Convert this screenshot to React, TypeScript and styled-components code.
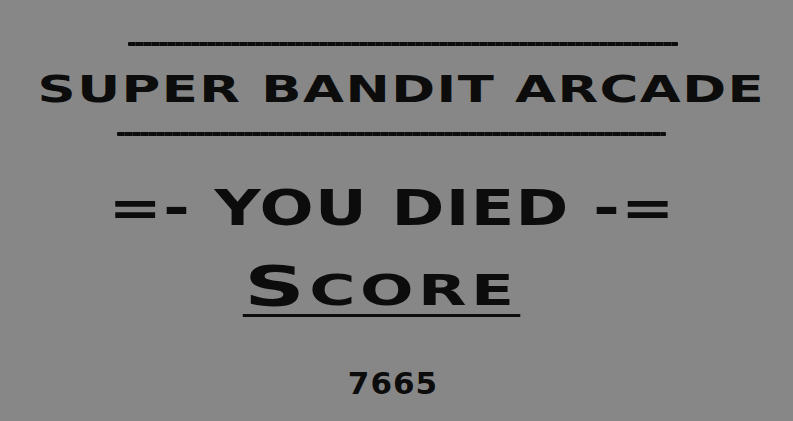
import React from 'react'
import styled, { createGlobalStyle } from 'styled-components'

const GlobalStyle = createGlobalStyle`
  html, body {
    margin: 0;
    padding: 0;
    background: #878787;
  }
  body {
    font-family: 'DejaVu Sans', 'Liberation Sans', sans-serif;
    color: #0c0c0c;
  }
`

const Screen = styled.div`
  align-items: center;
  box-sizing: border-box;
  display: flex;
  flex-direction: column;
  height: 421px;
  overflow: hidden;
  padding-top: 42px;
  width: 793px;
`

// row of joined hyphens used as a divider
const Rule = styled.div<{ $width: number; $shift: number; $gap: number }>`
  background: repeating-linear-gradient(
    90deg,
    #0c0c0c 0 7px,
    #262626 7px 8px
  );
  border-radius: 1px;
  height: 4px;
  margin-left: ${({ $shift }) => $shift * 2}px;
  margin-top: ${({ $gap }) => $gap}px;
  width: ${({ $width }) => $width}px;
`

const Wide = styled.div<{
  $size: number
  $stretch: number
  $shift: number
  $gap: number
}>`
  font-size: ${({ $size }) => $size}px;
  font-weight: bold;
  letter-spacing: 1px;
  line-height: 1;
  margin-left: ${({ $shift }) => $shift * 2}px;
  margin-top: ${({ $gap }) => $gap}px;
  text-transform: uppercase;
  transform: scaleX(${({ $stretch }) => $stretch});
  white-space: nowrap;
`

const ScoreLabel = styled(Wide)`
  border-bottom: 3px solid #0c0c0c;
  letter-spacing: 3px;
  padding: 0 1px;
`

const SmallCaps = styled.span`
  font-size: 42px;
`

const Points = styled.div`
  font-size: 31px;
  font-weight: bold;
  letter-spacing: 1px;
  line-height: 1;
  margin-left: -7px;
  margin-top: 51px;
`

const App = () => {
  const score = 7665
  return (
    <>
      <GlobalStyle />
      <Screen>
        <Rule $width={550} $shift={6.5} $gap={0} />
        <Wide $size={37} $stretch={1.43} $shift={4.5} $gap={25}>
          Super Bandit Arcade
        </Wide>
        <Rule $width={549} $shift={-5} $gap={24} />
        <Wide $size={49} $stretch={1.3} $shift={-4.5} $gap={48}>
          =- You Died -=
        </Wide>
        <ScoreLabel $size={56} $stretch={1.5} $shift={-15.5} $gap={25}>
          S<SmallCaps>core</SmallCaps>
        </ScoreLabel>
        <Points>{score}</Points>
      </Screen>
    </>
  )
}

export default App
